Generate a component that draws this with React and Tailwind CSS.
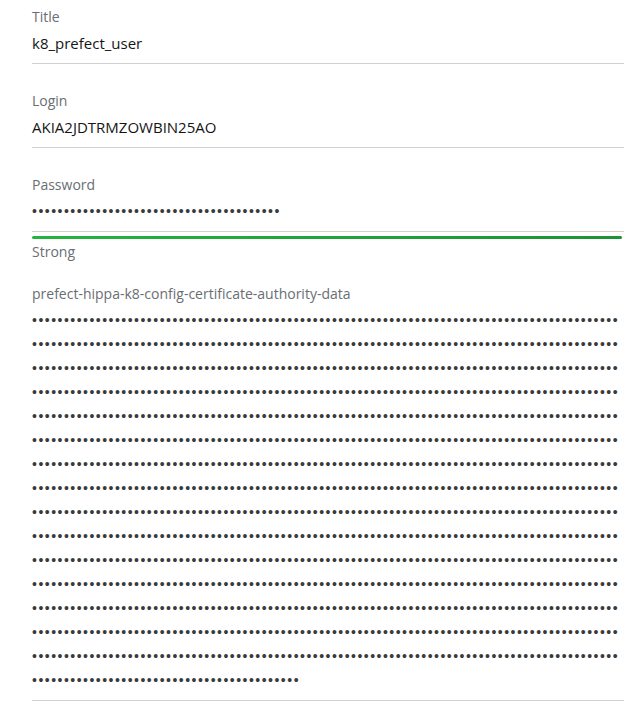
import React from 'react';

const font = { fontFamily: '"Open Sans", "Noto Sans", sans-serif' };

function Dots({ count }) {
  return (
    <div className="h-6 leading-6 text-[14px] text-[#3a3a3a] tracking-[1.48px] whitespace-nowrap overflow-hidden" style={{ fontFamily: '"Liberation Sans", Arial, sans-serif' }}>
      {'•'.repeat(count)}
    </div>
  );
}

function Field({ label, children, first, border = true }) {
  return (
    <div className={`${first ? 'pt-[7px]' : 'pt-[27px]'} pb-2 ${border ? 'border-b border-[#d2d2d2]' : ''}`}>
      <div className="h-5 leading-5 text-[14px] text-[#6a6e73]">{label}</div>
      <div className="mt-1">{children}</div>
    </div>
  );
}

export default function App() {
  const certRows = Array.from({ length: 15 }, () => 92);

  return (
    <div className="min-h-screen bg-white pl-8" style={font}>
      <Field label="Title" first>
        <div className="h-6 leading-6 text-[15px] text-[#151515]">k8_prefect_user</div>
      </Field>

      <Field label="Login">
        <div className="h-6 leading-6 text-[15px] text-[#151515]">AKIA2JDTRMZOWBIN25AO</div>
      </Field>

      <Field label="Password">
        <Dots count={39} />
      </Field>

      {/* Strength meter */}
      <div className="mt-1 mr-[2px] h-[3px] rounded-full bg-gradient-to-r from-[#25b440] to-[#1d9236]" />
      <div className="mt-[3px] h-5 leading-5 text-[14px] text-[#6a6e73]">Strong</div>

      <div className="pt-[22px] pb-2 border-b border-[#d2d2d2]">
        <div className="h-5 leading-5 text-[14px] text-[#6a6e73]">prefect-hippa-k8-config-certificate-authority-data</div>
        <div className="mt-1">
          {certRows.map((n, i) => (
            <Dots key={i} count={n} />
          ))}
          <Dots count={42} />
        </div>
      </div>
    </div>
  );
}
